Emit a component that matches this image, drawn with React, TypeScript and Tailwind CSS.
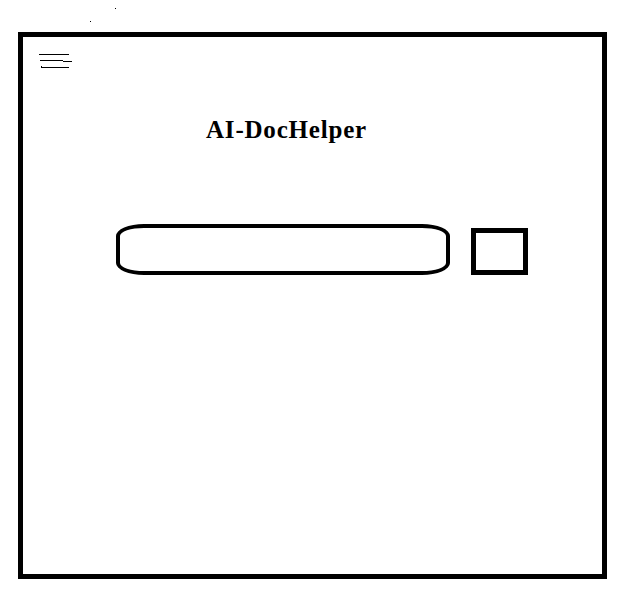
export default function App() {
  return (
    <div className="relative w-[621px] h-[593px] bg-white overflow-hidden pt-[32px] pl-[18px]">
      <span className="absolute left-[115px] top-[8px] w-px h-px bg-black" />
      <span className="absolute left-[90px] top-[21px] w-px h-px bg-black" />
      <div className="w-[589px] h-[547px] border-[5px] border-black flex flex-col items-start">
        <svg
          width="34"
          height="16"
          viewBox="0 0 34 16"
          shapeRendering="crispEdges"
          className="block ml-[16px] mt-[16px]"
        >
          <rect x="0" y="1" width="30" height="1" fill="#000" />
          <rect x="1" y="7" width="23" height="1" fill="#000" />
          <rect x="24" y="8" width="9" height="1" fill="#000" />
          <rect x="2" y="14" width="28" height="1" fill="#000" />
          <rect x="2" y="13" width="1" height="1" fill="#000" />
        </svg>
        <h1
          className="ml-[183px] mt-[49px] text-[25px] leading-[24px] tracking-[0.8px] font-bold text-black"
          style={{ fontFamily: '"Liberation Serif", "Times New Roman", serif' }}
        >
          AI-DocHelper
        </h1>
        <div className="flex items-start ml-[93px] mt-[82px]">
          <div className="w-[334px] h-[51px] border-[4px] border-black rounded-[28px/12px]" />
          <div className="ml-[21px] mt-[4px] w-[57px] h-[47px] border-[5px] border-black" />
        </div>
      </div>
    </div>
  );
}
